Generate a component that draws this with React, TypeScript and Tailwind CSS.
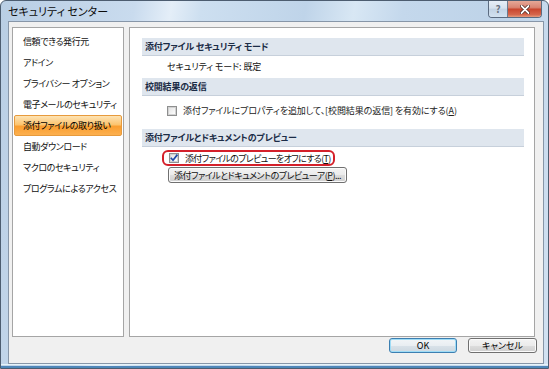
import React from "react";

const F = "font-['Noto_Sans_CJK_JP','Noto_Sans',sans-serif] [font-feature-settings:'palt']";

function Check({ checked }: { checked?: boolean }) {
  return (
    <span className="w-[10px] h-[10px] border border-[#8e8f8f] bg-[linear-gradient(135deg,#dcdcdc,#fbfbfb)] flex items-center justify-center shrink-0">
      <span className="w-[8px] h-[8px] bg-[linear-gradient(135deg,#e4e4e4,#fdfdfd)] border border-[#d2d2d2] flex items-center justify-center">
        {checked && (
          <svg width="8" height="8" viewBox="0 0 8 8" className="overflow-visible">
            <path d="M0.8 3.8 L3 6.2 L7.4 0.6" fill="none" stroke="#1f4aa8" strokeWidth="1.7" />
          </svg>
        )}
      </span>
    </span>
  );
}

function Header({ children }: { children: React.ReactNode }) {
  return (
    <div className="h-[18px] ml-[12px] mr-[10px] bg-[#dfe6ee] border-b border-[#c7d0db] flex items-center pl-[3px] text-[9px] tracking-[-0.2px] font-bold text-[#1b2c46] leading-none whitespace-nowrap">
      {children}
    </div>
  );
}

const navItems = [
  "信頼できる発行元",
  "アドイン",
  "プライバシー オプション",
  "電子メールのセキュリティ",
  "添付ファイルの取り扱い",
  "自動ダウンロード",
  "マクロのセキュリティ",
  "プログラムによるアクセス",
];

export default function App() {
  return (
    <div className={`${F} w-[549px] h-[369px] relative border border-[#4d5d70] rounded-t-[6px] bg-[linear-gradient(100deg,#b9cee4_0%,#c9dbee_22%,#e4eef8_28%,#cddff0_33%,#bfd4e9_50%,#d8e7f4_58%,#c4d8ec_66%,#bed3e8_82%,#d2e2f2_100%)] flex flex-col overflow-hidden`}>
      {/* title bar */}
      <div className="h-[20px] flex justify-between shrink-0">
        <div className="pl-[7px] pt-[3px] text-[11px] leading-[14px] text-[#0b0b0b] whitespace-nowrap">セキュリティ センター</div>
        <div className="flex mr-[6px] h-[17px] border border-t-0 border-[#5b6b80] rounded-b-[4px] overflow-hidden">
          <div className="w-[19px] h-full bg-[linear-gradient(#e6eef7_0%,#d6e2ee_45%,#c2d3e4_50%,#d3e2f0_100%)] flex items-center justify-center border-r border-[#6b7b8f] text-[10px] font-bold text-[#6a7482] leading-none">?</div>
          <div className="w-[33px] h-full bg-[linear-gradient(#e5a897_0%,#d98573_40%,#c9472f_52%,#d5664c_85%,#e69c7e_100%)] flex items-center justify-center">
            <svg width="10" height="9" viewBox="0 0 10 9">
              <path d="M1.5 1 L8.5 8 M8.5 1 L1.5 8" stroke="#3e1a14" strokeWidth="3.2" strokeLinecap="round" />
              <path d="M1.5 1 L8.5 8 M8.5 1 L1.5 8" stroke="#ffffff" strokeWidth="1.8" strokeLinecap="round" />
            </svg>
          </div>
        </div>
      </div>

      {/* client area */}
      <div className="ml-[7px] w-[536px] h-[343px] border border-[#8796a8] bg-[#f0f0f0] flex flex-col shrink-0">
        <div className="flex pt-[5px] pl-[3px] gap-[5px] h-[315px]">
          {/* nav */}
          <div className="w-[112px] h-[310px] border border-[#a5a5a5] bg-white pt-[3px]">
            {navItems.map((t, i) => (
              <div
                key={t}
                className={
                  i === 4
                    ? "mx-[1px] h-[21px] flex items-center pl-[8px] text-[9px] tracking-[-0.4px] text-black whitespace-nowrap bg-[linear-gradient(#fde3b4_0%,#fcc46f_45%,#fa9e30_55%,#fcb04f_100%)] border border-[#e79a3c] rounded-[2px]"
                    : "mx-[1px] h-[21px] flex items-center pl-[9px] text-[9px] tracking-[-0.4px] text-[#111] whitespace-nowrap"
                }
              >
                {t}
              </div>
            ))}
          </div>
          {/* right panel */}
          <div className="w-[406px] h-[310px] border border-[#a5a5a5] bg-white pt-[10px] text-[9px] tracking-[-0.1px] text-[#111] whitespace-nowrap">
            <Header>添付ファイル セキュリティ モード</Header>
            <div className="h-[20px] flex items-center pl-[37px] leading-none">セキュリティ モード: 既定</div>
            <div className="h-[2px]" />
            <Header>校閲結果の返信</Header>
            <div className="h-[33px] flex items-start pt-[10px] pl-[37px] gap-[6px] leading-[10px]">
              <Check />
              <span className="text-[#222]">
                添付ファイルにプロパティを追加して、[校閲結果の返信] を有効にする(<span className="underline">A</span>)
              </span>
            </div>
            <Header>添付ファイルとドキュメントのプレビュー</Header>
            <div className="pl-[32px] pt-[3px]">
              <div className="w-[173px] h-[16px] border-2 border-[#d4202a] rounded-[6px] flex items-center pl-[5px] gap-[6px] leading-none tracking-[-0.65px]">
                <Check checked />
                <span>
                  添付ファイルのプレビューをオフにする(<span className="underline">T</span>)
                </span>
              </div>
              <div className="ml-[6px] mt-[1px] w-[179px] h-[16px] border border-[#707070] rounded-[3px] bg-[linear-gradient(#f3f3f3_0%,#ebebeb_50%,#dddddd_52%,#cfcfcf_100%)] flex items-center justify-center leading-none tracking-[-0.5px] shadow-[inset_0_0_0_1px_#fbfbfb]">
                添付ファイルとドキュメントのプレビューア(<span className="underline">P</span>)...
              </div>
            </div>
          </div>
        </div>
        {/* footer */}
        <div className="flex justify-end pr-[6px] gap-[11px] mt-[1px]">
          <div className="w-[68px] h-[15px] border border-[#3c7fb1] rounded-[3px] bg-[linear-gradient(#f2f5f7_0%,#e9eef2_50%,#d9e2e9_52%,#cdd8e0_100%)] shadow-[inset_0_0_0_1px_#9fdcf6] flex items-center justify-center text-[9px] leading-none text-black">
            OK
          </div>
          <div className="w-[69px] h-[15px] border border-[#707070] rounded-[3px] bg-[linear-gradient(#f3f3f3_0%,#ebebeb_50%,#dddddd_52%,#cfcfcf_100%)] shadow-[inset_0_0_0_1px_#fbfbfb] flex items-center justify-center text-[9px] leading-none text-black">
            キャンセル
          </div>
        </div>
      </div>
      {/* bottom frame */}
      <div className="flex-1 border-t border-[#e6f4fb] shadow-[inset_0_-2px_0_#4e86b8]" />
    </div>
  );
}
